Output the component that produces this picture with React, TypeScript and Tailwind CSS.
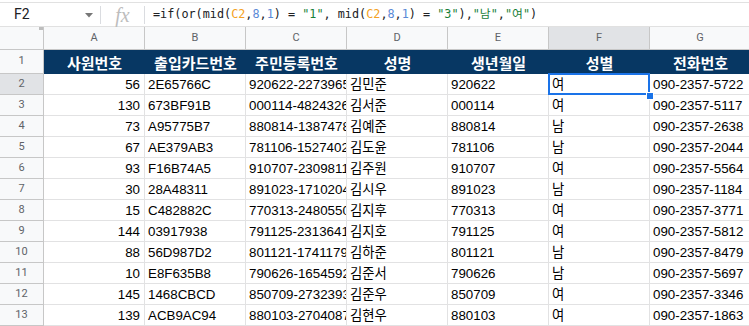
import React from "react";

const rows: [string, string, string, string, string, string, string][] = [
  ["56", "2E65766C", "920622-2273965", "김민준", "920622", "여", "090-2357-5722"],
  ["130", "673BF91B", "000114-4824326", "김서준", "000114", "여", "090-2357-5117"],
  ["73", "A95775B7", "880814-1387478", "김예준", "880814", "남", "090-2357-2638"],
  ["67", "AE379AB3", "781106-1527402", "김도윤", "781106", "남", "090-2357-2044"],
  ["93", "F16B74A5", "910707-2309811", "김주원", "910707", "여", "090-2357-5564"],
  ["30", "28A48311", "891023-1710204", "김시우", "891023", "남", "090-2357-1184"],
  ["15", "C482882C", "770313-2480550", "김지후", "770313", "여", "090-2357-3771"],
  ["144", "03917938", "791125-2313641", "김지호", "791125", "여", "090-2357-5812"],
  ["88", "56D987D2", "801121-1741179", "김하준", "801121", "남", "090-2357-8479"],
  ["10", "E8F635B8", "790626-1654592", "김준서", "790626", "남", "090-2357-5697"],
  ["145", "1468CBCD", "850709-2732393", "김준우", "850709", "여", "090-2357-3346"],
  ["139", "ACB9AC94", "880103-2704087", "김현우", "880103", "여", "090-2357-1863"],
];

const heads = ["사원번호", "출입카드번호", "주민등록번호", "성명", "생년월일", "성별", "전화번호"];
const letters = ["A", "B", "C", "D", "E", "F", "G"];

const cellFont = { fontFamily: '"Liberation Sans", Arial, "Noto Sans CJK KR", sans-serif' };

export default function App() {
  return (
    <div className="w-[749px] h-[326px] overflow-hidden bg-white relative" style={cellFont}>
      {/* formula bar */}
      <div className="pt-[2px]">
        <div className="h-[25px] border-y border-[#e1e1e1] flex items-center">
          <div
            className="w-[100px] h-full flex items-center justify-between pl-[14px] pr-[7px] text-[14px] text-[#202124]"
            style={{ fontFamily: 'Roboto, "Liberation Sans", sans-serif' }}
          >
            <span>F2</span>
            <svg width="8" height="5" viewBox="0 0 8 5" className="mt-[1px]">
              <path d="M0 0 L8 0 L4 4.5 Z" fill="#777" />
            </svg>
          </div>
          <div className="w-px h-[18px] bg-[#dadce0]" />
          <div
            className="w-[43px] h-full flex items-center justify-center text-[20px] italic text-[#bdbdbd] leading-none"
            style={{ fontFamily: '"Liberation Serif", "DejaVu Serif", serif' }}
          >
            fx
          </div>
          <div className="w-px h-[18px] bg-[#dadce0]" />
          <div
            className="pl-[8px] text-[11.8px] text-[#202124] whitespace-pre"
            style={{ fontFamily: '"DejaVu Sans Mono", "Noto Sans CJK KR", monospace' }}
          >
            <span>=if(or(mid(</span>
            <span className="text-[#f4a123]">C2</span>
            <span>,</span>
            <span className="text-[#5b8ad6]">8</span>
            <span>,</span>
            <span className="text-[#5b8ad6]">1</span>
            <span>) = </span>
            <span className="text-[#188038]">"1"</span>
            <span>, mid(</span>
            <span className="text-[#f4a123]">C2</span>
            <span>,</span>
            <span className="text-[#5b8ad6]">8</span>
            <span>,</span>
            <span className="text-[#5b8ad6]">1</span>
            <span>) = </span>
            <span className="text-[#188038]">"3"</span>
            <span>),</span>
            <span className="text-[#188038]">"남"</span>
            <span>,</span>
            <span className="text-[#188038]">"여"</span>
            <span>)</span>
          </div>
        </div>
      </div>

      {/* column header row */}
      <div className="flex h-[23px] bg-[#f8f9fa]" style={{ fontFamily: 'Roboto, "Liberation Sans", sans-serif' }}>
        <div className="w-[44px] shrink-0 border-r border-b border-[#c7c7c7] h-full relative">
          <div className="absolute right-0 top-0 w-[4px] h-[3px] bg-[#bdbdbd]" />
        </div>
        {letters.map((l) => (
          <div
            key={l}
            className={`w-[101px] shrink-0 border-r border-b border-[#c7c7c7] flex items-center justify-center text-[11px] text-[#5f6368] ${
              l === "F" ? "bg-[#e1e3e6]" : ""
            }`}
          >
            {l}
          </div>
        ))}
      </div>

      {/* row 1 header */}
      <div className="flex h-[24px]">
        <div
          className="w-[44px] shrink-0 bg-[#f8f9fa] border-r border-b border-[#c7c7c7] flex items-center justify-center text-[11px] text-[#5f6368]"
          style={{ fontFamily: 'Roboto, "Liberation Sans", sans-serif' }}
        >
          1
        </div>
        {heads.map((h) => (
          <div
            key={h}
            className="w-[101px] shrink-0 bg-[#073763] flex items-end justify-center pb-[1px] text-[15px] font-bold text-white leading-[20px]"
            style={{ fontFamily: '"Noto Sans CJK KR", sans-serif' }}
          >
            {h}
          </div>
        ))}
      </div>

      {/* data rows */}
      {rows.map((r, i) => (
        <div key={i} className="flex h-[21px]">
          <div
            className={`w-[44px] shrink-0 border-r border-b border-[#c7c7c7] flex items-center justify-center text-[11px] text-[#5f6368] ${
              i === 0 ? "bg-[#e1e3e6]" : "bg-[#f8f9fa]"
            }`}
            style={{ fontFamily: 'Roboto, "Liberation Sans", sans-serif' }}
          >
            {i + 2}
          </div>
          <div className="w-[101px] shrink-0 border-r border-b border-[#e2e2e3] flex items-end justify-end pr-[4px] pb-[1px] text-[13.33px] text-black leading-[17px]">
            {r[0]}
          </div>
          {r.slice(1).map((v, j) => (
            <div
              key={j}
              className="w-[101px] shrink-0 border-r border-b border-[#e2e2e3] flex items-end pl-[3px] pb-[1px] text-[13.33px] text-black leading-[17px] overflow-hidden whitespace-nowrap"
            >
              {v}
            </div>
          ))}
        </div>
      ))}

      {/* selection on F2 */}
      <div className="absolute left-[548px] top-[73px] w-[102px] h-[22px] border-2 border-[#1a73e8] pointer-events-none" />
      <div className="absolute left-[646px] top-[92px] w-[6px] h-[6px] bg-[#1a73e8] border border-white box-content" />
    </div>
  );
}
